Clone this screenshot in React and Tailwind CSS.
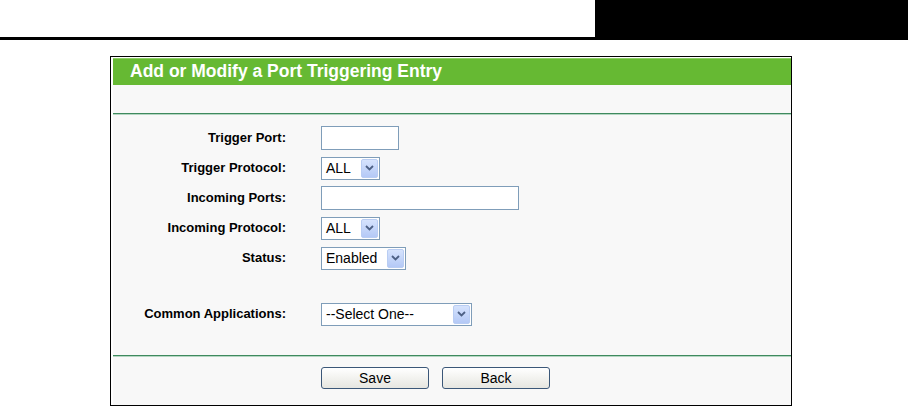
import React from "react"

const font = { fontFamily: '"Liberation Sans", Arial, sans-serif' }

function Chevron() {
  return (
    <svg width="9" height="6" viewBox="0 0 9 6">
      <path d="M1 1 L4.5 4.5 L8 1" fill="none" stroke="#4d6185" strokeWidth="1.8" />
    </svg>
  )
}

function Select({ value, width }) {
  return (
    <div className={`${width} h-[23px] border border-[#7f9db9] bg-white flex items-center justify-between pl-[4px] pr-[1px]`}>
      <span className="text-[14px] text-black leading-none">{value}</span>
      <span className="w-[17px] h-[19px] rounded-[2px] border border-[#b9cdf3] bg-gradient-to-b from-[#d6e3fd] to-[#b4c9f6] flex items-center justify-center">
        <Chevron />
      </span>
    </div>
  )
}

function Input({ width }) {
  return <div className={`${width} h-[24px] border border-[#7f9db9] bg-white`}></div>
}

function Row({ label, children, className = "" }) {
  return (
    <div className={`flex items-center h-[24px] ${className}`}>
      <div className="w-[173px] text-right text-[13px] font-bold text-black">{label}</div>
      <div className="ml-[35px] flex items-center">{children}</div>
    </div>
  )
}

function Button({ children }) {
  return (
    <button className="w-[108px] h-[22px] rounded-[3px] border border-[#3b5778] bg-gradient-to-b from-white to-[#e6e6e0] text-[14px] text-black leading-none">
      {children}
    </button>
  )
}

export default function App() {
  return (
    <div className="w-[908px] h-[407px] bg-white overflow-hidden" style={font}>
      {/* Top bar */}
      <div className="flex h-[40px]">
        <div className="w-[595px] border-b-[3px] border-black"></div>
        <div className="flex-1 bg-black"></div>
      </div>

      {/* Panel */}
      <div className="ml-[110px] mt-[16px] w-[682px] h-[350px] border border-black pl-[2px] pt-[1px] flex flex-col">
        <div className="h-[27px] bg-[#66b933] border-t border-[#8fcf66] flex items-center pl-[17px]">
          <span className="text-white font-bold text-[17.5px] leading-none">Add or Modify a Port Triggering Entry</span>
        </div>
        <div className="flex-1 bg-[#f8f8f8] flex flex-col">
          <div className="h-[28px]"></div>
          <div className="h-[2px] border-t border-[#3f8a5e] border-b border-b-[#b5d6c2]"></div>

          <div className="pt-[11px] flex flex-col gap-[6px]">
            <Row label="Trigger Port:">
              <Input width="w-[78px]" />
            </Row>
            <Row label="Trigger Protocol:">
              <Select value="ALL" width="w-[59px]" />
            </Row>
            <Row label="Incoming Ports:">
              <Input width="w-[198px]" />
            </Row>
            <Row label="Incoming Protocol:">
              <Select value="ALL" width="w-[59px]" />
            </Row>
            <Row label="Status:">
              <Select value="Enabled" width="w-[85px]" />
            </Row>
            <Row label="Common Applications:" className="mt-[26px]">
              <Select value="--Select One--" width="w-[151px]" />
            </Row>
          </div>

          <div className="mt-[29px] h-[2px] border-t border-[#3f8a5e] border-b border-b-[#b5d6c2]"></div>
          <div className="pt-[10px] flex gap-[13px] pl-[208px]">
            <Button>Save</Button>
            <Button>Back</Button>
          </div>
        </div>
      </div>
    </div>
  )
}
